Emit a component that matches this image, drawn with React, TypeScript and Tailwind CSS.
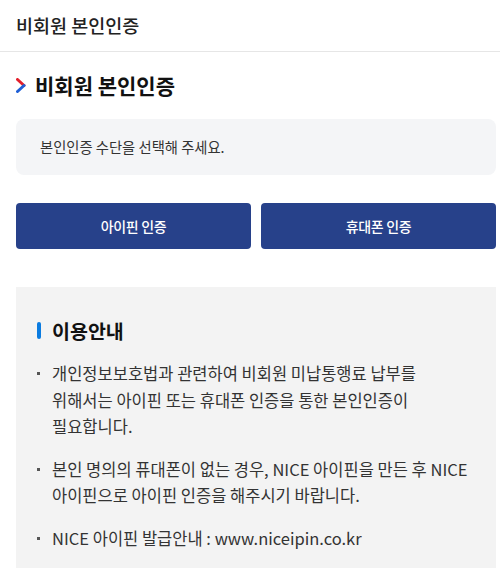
import React from 'react';

const FONT = { fontFamily: '"Noto Sans CJK KR", "Noto Sans", sans-serif' };

// lines are broken the way the original page wraps them
const NOTICES = [
  ['개인정보보호법과 관련하여 비회원 미납통행료 납부를', '위해서는 아이핀 또는 휴대폰 인증을 통한 본인인증이', '필요합니다.'],
  ['본인 명의의 퓨대폰이 없는 경우, NICE 아이핀을 만든 후 NICE', '아이핀으로 아이핀 인증을 해주시기 바랍니다.'],
  ['NICE 아이핀 발급안내 : www.niceipin.co.kr'],
];

function Chevron() {
  return (
    <svg width="10" height="15" viewBox="0 0 10 15" className="shrink-0">
      <path d="M1.5 1.5 L8 7.5" stroke="#e3202c" strokeWidth="3" strokeLinecap="round" />
      <path d="M8 7.5 L1.5 13.5" stroke="#1f5fd6" strokeWidth="3" strokeLinecap="round" />
    </svg>
  );
}

export default function App() {
  return (
    <div className="w-[500px] h-[568px] overflow-hidden bg-white text-[#222]" style={FONT}>
      {/* Top bar */}
      <header className="h-[52px] flex items-center pl-4 border-b border-[#e6e6e6]">
        <h1 className="text-[18.5px] font-medium">비회원 본인인증</h1>
      </header>

      <div className="pl-4 pr-1">
        {/* Section title */}
        <div className="flex items-center gap-[9px] h-[67px]">
          <Chevron />
          <h2 className="text-[21px] font-bold text-[#111]">비회원 본인인증</h2>
        </div>

        <div className="h-[56px] rounded-lg bg-[#f4f5f7] flex items-center pl-6">
          <p className="text-[14.3px] text-[#333]">본인인증 수단을 선택해 주세요.</p>
        </div>

        <div className="mt-7 grid grid-cols-2 gap-[10px]">
          <button className="h-[46px] rounded bg-[#27418a] text-white text-[14px] font-medium tracking-[-0.3px]">
            아이핀 인증
          </button>
          <button className="h-[46px] rounded bg-[#27418a] text-white text-[14px] font-medium tracking-[-0.3px]">
            휴대폰 인증
          </button>
        </div>

        {/* Notice */}
        <section className="mt-[38px] bg-[#f3f3f3] pl-[21px] pr-4 pt-[29px] pb-10">
          <div className="flex items-center gap-[11px]">
            <span className="w-[4px] h-[17px] rounded-full bg-[#0a7be0]" />
            <h3 className="text-[19.5px] font-bold text-[#111]">이용안내</h3>
          </div>
          <ul className="mt-[15px] flex flex-col gap-[16px]">
            {NOTICES.map((lines) => (
              <li key={lines[0]} className="flex items-start text-[16.5px] leading-[26.5px] text-[#333]">
                <span className="w-[3px] h-[3px] bg-[#555] mt-[12px] mr-[12px] shrink-0" />
                <span className="whitespace-nowrap">
                  {lines.map((l, i) => (
                    <React.Fragment key={i}>
                      {i > 0 && <br />}
                      {l}
                    </React.Fragment>
                  ))}
                </span>
              </li>
            ))}
          </ul>
        </section>
      </div>
    </div>
  );
}
